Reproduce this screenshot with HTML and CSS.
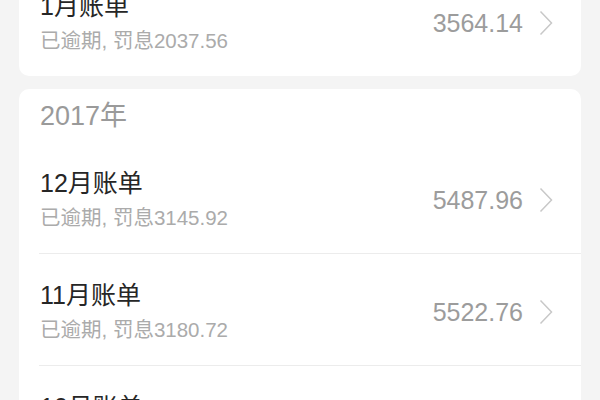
FILE: index.html
```html
<!DOCTYPE html>
<html lang="zh-CN">
<head>
<meta charset="utf-8">
<link rel="stylesheet" href="styles.css">
</head>
<body>
<div class="page">
  <section class="card">
    <div class="year">2018年</div>
    <div class="row">
      <div class="info">
        <div class="title">1月账单</div>
        <div class="sub">已逾期, 罚息2037.56</div>
      </div>
      <div class="amount">3564.14</div>
      <svg class="chev" viewBox="0 0 14 26" width="14" height="26"><polyline points="1.5,1.5 12.5,13 1.5,24.5"/></svg>
    </div>
  </section>
  <section class="card">
    <div class="year">2017年</div>
    <div class="row">
      <div class="info">
        <div class="title">12月账单</div>
        <div class="sub">已逾期, 罚息3145.92</div>
      </div>
      <div class="amount">5487.96</div>
      <svg class="chev" viewBox="0 0 14 26" width="14" height="26"><polyline points="1.5,1.5 12.5,13 1.5,24.5"/></svg>
    </div>
    <div class="row">
      <div class="info">
        <div class="title">11月账单</div>
        <div class="sub">已逾期, 罚息3180.72</div>
      </div>
      <div class="amount">5522.76</div>
      <svg class="chev" viewBox="0 0 14 26" width="14" height="26"><polyline points="1.5,1.5 12.5,13 1.5,24.5"/></svg>
    </div>
    <div class="row">
      <div class="info">
        <div class="title">10月账单</div>
        <div class="sub">已逾期, 罚息3215.50</div>
      </div>
      <div class="amount">5557.54</div>
      <svg class="chev" viewBox="0 0 14 26" width="14" height="26"><polyline points="1.5,1.5 12.5,13 1.5,24.5"/></svg>
    </div>
  </section>
</div>
</body>
</html>
```
FILE: styles.css
```css
html, body {
  margin: 0;
  padding: 0;
  background: #f4f4f4;
}
body {
  font-family: "Liberation Sans", "Noto Sans CJK SC", sans-serif;
  width: 600px;
  height: 400px;
  overflow: hidden;
}
.page {
  margin-top: -88px;
  padding: 0 19px;
  display: flex;
  flex-direction: column;
  gap: 13px;
}
.card {
  background: #fff;
  border-radius: 10px;
  overflow: hidden;
}
.year {
  height: 53px;
  display: flex;
  align-items: center;
  padding-left: 21px;
  font-size: 27px;
  color: #9a9a9a;
  line-height: 30px;
}
.row {
  margin-left: 20px;
  padding: 26px 28px 22px 1px;
  border-bottom: 1px solid #ececec;
  display: flex;
  align-items: center;
}
.row:last-child {
  border-bottom: none;
}
.info {
  flex: 1;
}
.title {
  font-size: 25px;
  line-height: 30px;
  color: #262626;
}
.sub {
  margin-top: 7px;
  font-size: 20.5px;
  line-height: 26px;
  color: #ababab;
}
.amount {
  font-size: 25px;
  line-height: 30px;
  color: #9c9c9c;
  margin-right: 16px;
}
.chev {
  display: block;
}
.chev polyline {
  fill: none;
  stroke: #c8c8c8;
  stroke-width: 1.5;
}
```
